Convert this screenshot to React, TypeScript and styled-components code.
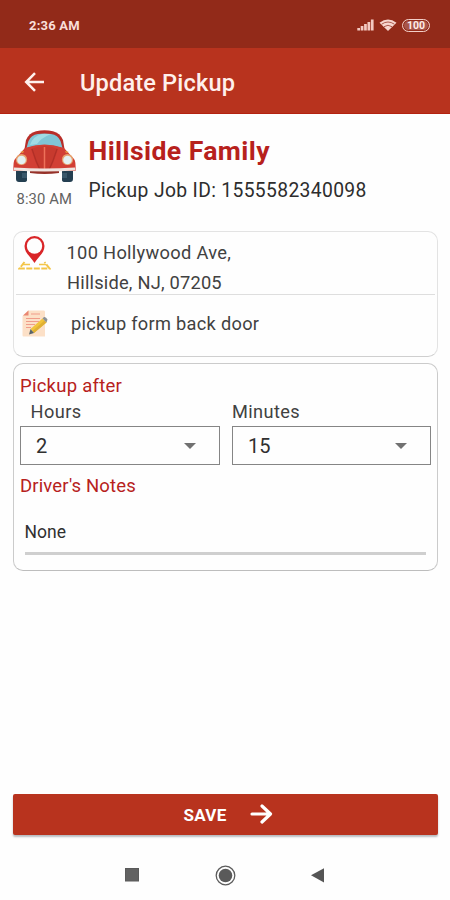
import React from "react";
import styled, { createGlobalStyle } from "styled-components";

const GlobalStyle = createGlobalStyle`
  * { box-sizing: border-box; }
  body { margin: 0; background: #fefefe; font-family: Roboto, "Liberation Sans", sans-serif; }
  button { font-family: inherit; }
  h1, h2, p { margin: 0; }
`;

const Screen = styled.main`
  width: 450px;
  height: 900px;
  display: flex;
  flex-direction: column;
  background: #fefefe;
  overflow: hidden;
`;

const Text = styled.span<{ $size: number; $line: number; $spacing?: number; $weight?: number; $color?: string }>`
  display: block;
  white-space: nowrap;
  font-size: ${(p) => p.$size}px;
  line-height: ${(p) => p.$line}px;
  letter-spacing: ${(p) => p.$spacing ?? 0}px;
  font-weight: ${(p) => p.$weight ?? 400};
  color: ${(p) => p.$color ?? "#414141"};
`;

const StatusBar = styled.header`
  height: 48px;
  flex: none;
  display: flex;
  align-items: center;
  justify-content: space-between;
  padding: 4px 20px 0 29px;
  background: #922a19;
`;

const StatusIcons = styled.div`
  display: flex;
  align-items: center;
  gap: 5px;
  margin-top: -2px;
`;

const Battery = styled.span`
  display: flex;
  align-items: center;
  justify-content: center;
  width: 28px;
  height: 13px;
  border: 1.5px solid #f3cfc8;
  border-radius: 7px;
  background: #a8554a;
  box-shadow: inset 0 0 0 1px #922a19;
  color: #ffece8;
  font-size: 10.5px;
  font-weight: 700;
  line-height: 10px;
  padding-top: 1px;
`;

const AppBar = styled.nav`
  height: 65.5px;
  flex: none;
  display: flex;
  align-items: center;
  gap: 35px;
  padding: 3px 24px 0;
  background: #b8331e;
  border-bottom: 1px solid #b42310;
`;

const Title = styled.div`
  padding-top: 2px;
`;

const Summary = styled.section`
  display: flex;
  height: 117.5px;
  flex: none;
  padding: 16px 13px 0;
`;

const CarColumn = styled.div`
  width: 75.5px;
  display: flex;
  flex-direction: column;
`;

const TimeLabel = styled.div`
  padding: 7.5px 0 0 3.5px;
`;

const JobColumn = styled.div`
  display: flex;
  flex-direction: column;
  gap: 11px;
  padding-top: 6px;
`;

const Card = styled.section<{ $height: number; $border: string; $bottom: string }>`
  height: ${(p) => p.$height}px;
  flex: none;
  margin: 0 12px 6px 13px;
  border: 1px solid ${(p) => p.$border};
  border-bottom-color: ${(p) => p.$bottom};
  border-radius: 10px;
`;

const AddressRow = styled.div`
  display: flex;
  height: 63px;
  margin: 0 2px;
  border-bottom: 1px solid #dedede;
`;

const NoteRow = styled.div`
  display: flex;
  align-items: flex-start;
  height: 60px;
  padding-top: 15px;
  margin: 0 2px;
`;

const IconCell = styled.div<{ $width: number; $left: number; $top: number }>`
  width: ${(p) => p.$width}px;
  padding: ${(p) => p.$top}px 0 0 ${(p) => p.$left}px;
  flex: none;
`;

const AddressLines = styled.div`
  padding-top: 6px;
`;

const SecondLine = styled.div`
  padding-left: 0.5px;
`;

const Form = styled.div`
  padding: 10px 6.5px 0 6px;
`;

const Fields = styled.div`
  display: grid;
  grid-template-columns: 200px 199px;
  column-gap: 12px;
  margin-bottom: 9px;
`;

const FieldLabel = styled.div<{ $inset: number }>`
  padding-left: ${(p) => p.$inset}px;
  margin: 2px 0 2px;
`;

const Select = styled.div`
  display: flex;
  align-items: center;
  justify-content: space-between;
  height: 39px;
  padding: 1px 23px 0 15px;
  border: 1px solid #858585;
`;

const NotesInput = styled.div`
  margin: 19px 5px 0 4.5px;
  height: 37.5px;
  border-bottom: 3px solid #cfcfcf;
  padding-top: 3px;
`;

const Spacer = styled.div`
  flex: 1;
`;

const SaveButton = styled.button`
  flex: none;
  display: flex;
  align-items: center;
  height: 41px;
  margin: 0 12px 0 13px;
  padding: 2px 0 0 170.5px;
  border: 0;
  border-radius: 2px;
  background: #b8331e;
  box-shadow: 0 2px 2px rgba(70, 80, 90, 0.38);
`;

const SaveLabel = styled.span`
  width: 66.5px;
  text-align: left;
`;

const ButtonArrow = styled.span`
  display: flex;
  margin-top: -2px;
`;

const SystemNav = styled.footer`
  flex: none;
  display: flex;
  align-items: center;
  height: 65.5px;
  padding: 15.5px 0 0 125px;
`;

const NavGap = styled.span<{ $width: number }>`
  width: ${(p) => p.$width}px;
`;

const SignalIcon = () => (
  <svg width="17" height="12" viewBox="0 0 17 12" fill="#f4c9c1">
    <rect x="0.3" y="9" width="2.7" height="2.5" />
    <rect x="3.7" y="7" width="2.7" height="4.5" />
    <rect x="7.1" y="5" width="2.7" height="6.5" />
    <rect x="10.5" y="3" width="2.7" height="8.5" />
    <rect x="13.9" y="0.5" width="2.7" height="11" />
  </svg>
);

const WifiIcon = () => (
  <svg width="18" height="12" viewBox="0 0 18 12">
    <path d="M0.5 3.8Q9-3 17.5 3.8L9 12Z" fill="#f7d6cf" />
    <path d="M2.6 5.2Q9 0.8 15.4 5.2M5 7.7Q9 4.8 13 7.7" fill="none" stroke="#a34b3e" strokeWidth="0.9" />
  </svg>
);

const BackIcon = () => (
  <svg width="21" height="20" viewBox="0 0 21 20" fill="none" stroke="#fff1ed" strokeWidth="2.5">
    <path d="M20 10H2.4M11 1.2L2.2 10L11 18.8" />
  </svg>
);

const CarIcon = () => (
  <svg width="63" height="52" viewBox="0 0 63 52">
    <path d="M3 38H14V50Q14 52 11 52H6Q3 52 3 49ZM49 38H60V49Q60 52 57 52H52Q49 52 49 50Z" fill="#243f51" />
    <path d="M9 43H14V48H9ZM49 43H54V48H49Z" fill="#39576a" />
    <path d="M11 22L13 10Q16 3 23 1.200Q31.500-.6 40 1.200Q47 3 50 10L52 22Z" fill="#b82e29" />
    <path d="M13.500 18L15.500 11Q18 5 25 4Q31.500 3 38 4Q45 5 47.500 11L49.500 18Q31.500 12 13.500 18Z" fill="#80c5d5" />
    <path d="M17 15Q20 6 29 4H38Q28 8 24 14Z" fill="#a0dbe4" />
    <path d="M12 18Q31.500 11 51 18L61 29Q63 31 62.500 41H.5Q0 31 2 29Z" fill="#d23f34" />
    <path d="M18 19Q31.500 13 45 19Q42 30 36 42H27Q21 30 18 19Z" fill="#c73a2e" />
    <path d="M19 19Q23 32 28 42M44 19Q40 32 35 42" fill="none" stroke="#b12f27" strokeWidth="1.200" />
    <path d="M31.500 17V41" stroke="#ee7159" strokeWidth="1.500" />
    <path d="M17 40H46V43Q31.500 45 17 43Z" fill="#963129" />
    <path d="M1 37.500Q31.500 39.500 62 37.500V40.500Q31.500 42.500 1 40.500Z" fill="#efe4df" />
    <circle cx="8.500" cy="29.500" r="5.600" fill="#e7a16e" />
    <circle cx="54.500" cy="29.500" r="5.600" fill="#e7a16e" />
    <circle cx="8.500" cy="30" r="4.300" fill="#e3f0f1" />
    <circle cx="54.500" cy="30" r="4.300" fill="#e3f0f1" />
    <path d="M7 22L11 21L10 23ZM56 22L52 21L53 23Z" fill="#e8a23c" />
  </svg>
);

const PinIcon = () => (
  <svg width="33" height="34" viewBox="0 0 33 34">
    <path d="M6.500 26L1.500 32.500H31.500L26.500 26" fill="none" stroke="#f3c548" strokeWidth="2" strokeDasharray="6 1.500" />
    <path d="M5 28.500H12M21 28.500H28" stroke="#f3c548" strokeWidth="1.500" />
    <path d="M16.500 27C12.500 20.500 6.500 17 6.500 10A10 10 0 0 1 26.500 10C26.500 17 20.500 20.500 16.500 27Z" fill="#d92528" />
    <circle cx="16.500" cy="10" r="7.700" fill="#fefefe" />
  </svg>
);

const NoteIcon = () => (
  <svg width="26" height="27" viewBox="0 0 26 27">
    <path d="M6 .5H22Q23 .5 23 2V26.500H1.500Q.5 26.500 .5 25V6Z" fill="#fce0c7" />
    <path d="M6.500 .5V5.500H1Z" fill="#e98672" />
    <g stroke="#f09c89" strokeWidth="1.100">
      <path d="M9 4H18M4 8.500H18M4 11.500H17M4 14.500H13M4 17.500H9" />
    </g>
    <path d="M8.500 19L20.500 8.500L24.500 12.500L12 23Z" fill="#f1c43a" />
    <path d="M10.500 21L22.500 10.500L24.500 12.500L12 23Z" fill="#e0b034" />
    <path d="M20.500 8.500L22 7Q24 6.500 25.500 9.500L24.500 12.500Z" fill="#8d9294" />
    <path d="M8.500 19L12 23L7 24.500Z" fill="#58646a" />
  </svg>
);

const CaretIcon = () => (
  <svg width="12" height="6" viewBox="0 0 12 6">
    <path d="M0 0H12L6 6Z" fill="#717171" />
  </svg>
);

const ForwardIcon = () => (
  <svg width="23" height="20" viewBox="0 0 23 20" fill="none" stroke="#fff" strokeWidth="3.2" strokeLinecap="round" strokeLinejoin="round">
    <path d="M2 10H20M12 2L20.500 10L12 18" />
  </svg>
);

const RecentsIcon = () => (
  <svg width="14" height="14" viewBox="0 0 14 14">
    <rect x="0.500" y="0.500" width="13" height="12.500" fill="#626262" stroke="#5a5a5a" />
  </svg>
);

const HomeIcon = () => (
  <svg width="21" height="21" viewBox="0 0 21 21">
    <circle cx="10.500" cy="10.500" r="9.300" fill="none" stroke="#5c5c5c" strokeWidth="1.300" />
    <circle cx="10.500" cy="10.500" r="6.800" fill="#5a5a5a" />
  </svg>
);

const BackTriangle = () => (
  <svg width="13" height="15" viewBox="0 0 13 15">
    <path d="M0 7.300L13 .3V14.500Z" fill="#555" />
  </svg>
);

const RED = "#b7211c";

export default function App() {
  return (
    <>
      <GlobalStyle />
      <Screen>
        <StatusBar>
          <Text $size={13} $line={20} $weight={700} $color="#f9ded9" $spacing={0.2}>2:36 AM</Text>
          <StatusIcons>
            <SignalIcon />
            <WifiIcon />
            <Battery>100</Battery>
          </StatusIcons>
        </StatusBar>
        <AppBar>
          <BackIcon />
          <Title>
            <Text as="h1" $size={23.6} $line={30} $weight={500} $color="#fff0ec" $spacing={0.15}>Update Pickup</Text>
          </Title>
        </AppBar>
        <Summary>
          <CarColumn>
            <CarIcon />
            <TimeLabel>
              <Text $size={14.8} $line={20} $color="#626262" $spacing={0.1}>8:30 AM</Text>
            </TimeLabel>
          </CarColumn>
          <JobColumn>
            <Text as="h2" $size={26.6} $line={30} $weight={700} $color={RED} $spacing={0.4}>Hillside Family</Text>
            <Text $size={19.3} $line={28} $color="#2d2d2d" $spacing={0.35}>Pickup Job ID: 1555582340098</Text>
          </JobColumn>
        </Summary>
        <Card $height={126} $border="#e3e3e3" $bottom="#cfcfcf">
          <AddressRow>
            <IconCell $width={50.5} $left={2} $top={4}><PinIcon /></IconCell>
            <AddressLines>
              <Text $size={18.3} $line={30} $spacing={0.3}>100 Hollywood Ave,</Text>
              <SecondLine>
                <Text $size={18.3} $line={29} $spacing={0.2}>Hillside, NJ, 07205</Text>
              </SecondLine>
            </AddressLines>
          </AddressRow>
          <NoteRow>
            <IconCell $width={55} $left={6} $top={0}><NoteIcon /></IconCell>
            <Text $size={18.2} $line={28} $spacing={0.3}>pickup form back door</Text>
          </NoteRow>
        </Card>
        <Card $height={208} $border="#cbcbcb" $bottom="#bdbdbd">
          <Form>
            <Text $size={18.5} $line={24} $spacing={0.25} $color={RED}>Pickup after</Text>
            <Fields>
              <div>
                <FieldLabel $inset={10.5}><Text $size={18.2} $line={24} $spacing={0.45}>Hours</Text></FieldLabel>
                <Select><Text $size={20} $line={28} $color="#303030">2</Text><CaretIcon /></Select>
              </div>
              <div>
                <FieldLabel $inset={0}><Text $size={18.2} $line={24} $spacing={0.4}>Minutes</Text></FieldLabel>
                <Select><Text $size={20} $line={28} $color="#303030">15</Text><CaretIcon /></Select>
              </div>
            </Fields>
            <Text $size={18.5} $line={24} $spacing={0.15} $color={RED}>Driver's Notes</Text>
            <NotesInput><Text $size={17.5} $line={24} $color="#303030">None</Text></NotesInput>
          </Form>
        </Card>
        <Spacer />
        <SaveButton>
          <SaveLabel>
            <Text $size={17} $line={24} $weight={700} $color="#fff" $spacing={0.3}>SAVE</Text>
          </SaveLabel>
          <ButtonArrow><ForwardIcon /></ButtonArrow>
        </SaveButton>
        <SystemNav>
          <RecentsIcon />
          <NavGap $width={76} />
          <HomeIcon />
          <NavGap $width={75} />
          <BackTriangle />
        </SystemNav>
      </Screen>
    </>
  );
}
